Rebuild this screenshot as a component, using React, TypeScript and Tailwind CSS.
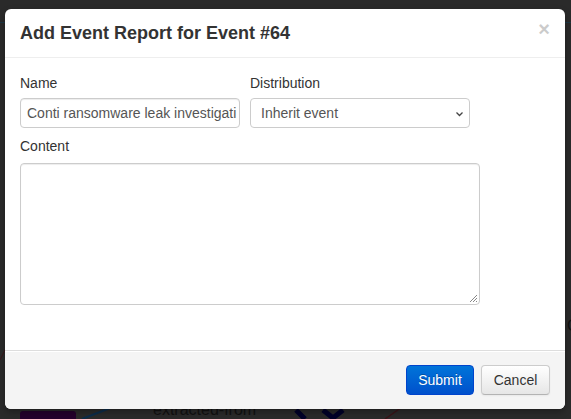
import React from "react";

export default function App() {
  const font = { fontFamily: '"Liberation Sans", Arial, Helvetica, sans-serif' };
  return (
    <div className="relative w-[571px] h-[419px] overflow-hidden bg-[#2a2a2a]" style={font}>
      {/* underlying page visible behind backdrop */}
      <div className="absolute left-0 top-[22px] w-full h-px bg-[#1c3644]" />
      <div className="absolute left-[20px] top-[411px] w-[56px] h-[12px] rounded-[3px] bg-[#24002c]" />
      <svg className="absolute left-0 top-[300px]" width="571" height="119" viewBox="0 0 571 119">
        <line x1="82" y1="119" x2="118" y2="105" stroke="#0c2c4a" strokeWidth="2" />
        <line x1="385" y1="119" x2="402" y2="107" stroke="#3a1418" strokeWidth="1.5" />
        <path d="M296 110 L305 119 M323 110 L333 118 L343 110" stroke="#000028" strokeWidth="5" fill="none" />
        <line x1="0" y1="60" x2="6" y2="48" stroke="#3a1418" strokeWidth="1" />
      </svg>
      <div className="absolute left-[153px] top-[400px] text-[16px] text-[#111] leading-[20px]">extracted-from</div>
      <div className="absolute left-[567px] top-[316px] text-[16px] text-[#111] leading-[20px]">C</div>

      {/* modal */}
      <div className="absolute left-[5px] top-[9px] w-[560px] h-[400px] bg-white rounded-[6px] flex flex-col overflow-hidden shadow-[0_3px_7px_rgba(0,0,0,0.3)]">
        <div className="relative h-[49px] px-[15px] py-[9px] border-b border-[#eeeeee] shrink-0">
          <h3 className="text-[18px] font-bold leading-[30px] text-[#333]">Add Event Report for Event #64</h3>
          <span className="absolute right-[15px] top-[10px] text-[20px] font-bold leading-[20px] text-[#000] opacity-20">×</span>
        </div>
        <div className="flex-1 px-[15px] pt-[15px]">
          <div className="flex gap-[10px]">
            <div className="flex flex-col">
              <label className="text-[14px] leading-[20px] text-[#333] mb-[5px]">Name</label>
              <input
                readOnly
                value="Conti ransomware leak investigati"
                className="w-[220px] h-[30px] pl-[6px] pr-[1px] py-[4px] border border-[#cccccc] rounded-[4px] text-[14px] leading-[20px] text-[#555] bg-white outline-none shadow-[inset_0_1px_1px_rgba(0,0,0,0.075)]"
                style={font}
              />
            </div>
            <div className="flex flex-col">
              <label className="text-[14px] leading-[20px] text-[#333] mb-[5px]">Distribution</label>
              <div className="relative w-[220px] h-[30px] border border-[#cccccc] rounded-[4px] bg-white">
                <span className="absolute left-[10px] top-[4px] text-[14px] leading-[20px] text-[#555]">Inherit event</span>
                <svg className="absolute right-[5px] top-[12px]" width="9" height="7" viewBox="0 0 9 7">
                  <path d="M1.5 1.5 L4.5 4.5 L7.5 1.5" stroke="#444" strokeWidth="1.3" fill="none" />
                </svg>
              </div>
            </div>
          </div>
          <div className="flex flex-col mt-[8px]">
            <label className="text-[14px] leading-[20px] text-[#333] mb-[7px]">Content</label>
            <div className="relative w-[460px] h-[142px] border border-[#cccccc] rounded-[4px] bg-white shadow-[inset_0_1px_1px_rgba(0,0,0,0.075)]">
              <svg className="absolute right-[1px] bottom-[1px]" width="9" height="9" viewBox="0 0 9 9">
                <path d="M8 1 L1 8 M8 4 L4 8 M8 7 L7 8" stroke="#888" strokeWidth="1" />
              </svg>
            </div>
          </div>
        </div>
        <div className="h-[59px] shrink-0 bg-[#f4f4f4] border-t border-[#dddddd] shadow-[inset_0_1px_0_#fff] flex items-start justify-end gap-[7px] pt-[14px] pr-[15px]">
          <button
            className="h-[30px] w-[68px] rounded-[4px] text-[14px] leading-[20px] text-white border border-[#0044cc] bg-gradient-to-b from-[#0074d9] to-[#0050cc] [text-shadow:0_-1px_0_rgba(0,0,0,0.25)]"
            style={font}
          >
            Submit
          </button>
          <button
            className="h-[30px] w-[69px] rounded-[4px] text-[14px] leading-[20px] text-[#333] border border-[#cccccc] border-b-[#b3b3b3] bg-gradient-to-b from-[#ffffff] to-[#e6e6e6] shadow-[inset_0_1px_0_rgba(255,255,255,0.2),0_1px_2px_rgba(0,0,0,0.05)]"
            style={font}
          >
            Cancel
          </button>
        </div>
      </div>
    </div>
  );
}
